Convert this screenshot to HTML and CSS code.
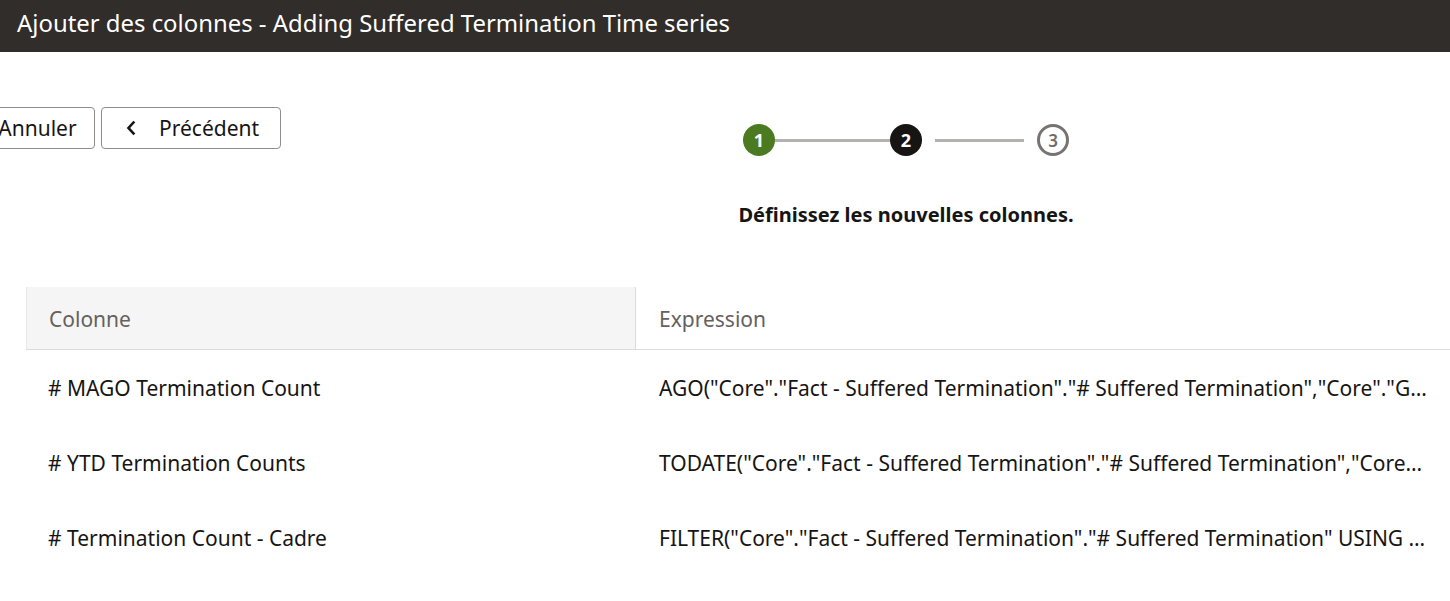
FILE: index.html
```html
<!DOCTYPE html>
<html lang="fr">
<head>
<meta charset="utf-8">
<title>Ajouter des colonnes</title>
<link rel="stylesheet" href="styles.css">
</head>
<body>
<header class="titlebar">
  <h1 class="title">Ajouter des colonnes - Adding Suffered Termination Time series</h1>
</header>
<main class="content">
  <div class="toolbar">
    <div class="buttons">
      <button class="btn btn-cancel">Annuler</button>
      <button class="btn btn-prev">
        <svg class="chev" width="12" height="16" viewBox="0 0 12 16"><path d="M8.5 2.5 L3.5 8 L8.5 13.5" fill="none" stroke="#161513" stroke-width="2.6" stroke-linecap="square"/></svg>
        <span>Précédent</span>
      </button>
    </div>
    <div class="wizard">
      <div class="stepper">
        <span class="step step-done">1</span>
        <span class="line line-1"></span>
        <span class="step step-current">2</span>
        <span class="line line-2"></span>
        <span class="step step-todo">3</span>
      </div>
      <p class="instr">Définissez les nouvelles colonnes.</p>
    </div>
  </div>
  <div class="table">
    <div class="row head">
      <div class="cell c1">Colonne</div>
      <div class="cell c2">Expression</div>
    </div>
    <div class="row">
      <div class="cell c1"># MAGO Termination Count</div>
      <div class="cell c2">AGO("Core"."Fact - Suffered Termination"."# Suffered Termination","Core"."G…</div>
    </div>
    <div class="row">
      <div class="cell c1"># YTD Termination Counts</div>
      <div class="cell c2">TODATE("Core"."Fact - Suffered Termination"."# Suffered Termination","Core…</div>
    </div>
    <div class="row">
      <div class="cell c1"># Termination Count - Cadre</div>
      <div class="cell c2">FILTER("Core"."Fact - Suffered Termination"."# Suffered Termination" USING …</div>
    </div>
  </div>
</main>
</body>
</html>
```

FILE: styles.css
```css
html, body {
  margin: 0;
  padding: 0;
  background: #ffffff;
  overflow: hidden;
  width: 1450px;
  height: 601px;
  font-family: "Noto Sans", "Open Sans", sans-serif;
  color: #161513;
}

.titlebar {
  height: 52px;
  background: #312d2a;
  display: flex;
  align-items: center;
  padding-left: 17px;
  box-sizing: border-box;
}

.title {
  margin: 0;
  font-size: 23.9px;
  font-weight: 400;
  color: #ffffff;
  letter-spacing: 0;
  line-height: 1;
  padding-bottom: 6px;
}

.content {
  padding-top: 55px;
}

.toolbar {
  display: flex;
  align-items: flex-start;
}

.buttons {
  display: flex;
  gap: 6px;
  margin-left: -28px;
}

.btn {
  height: 42px;
  border: 1px solid #8f8c89;
  border-radius: 4px;
  background: #ffffff;
  font-family: inherit;
  font-size: 21px;
  color: #161513;
  display: flex;
  align-items: center;
  box-sizing: border-box;
  padding: 0;
}

.btn-cancel {
  width: 123px;
  justify-content: center;
  padding-left: 8px;
}

.btn-prev {
  width: 180px;
  padding-left: 23px;
  gap: 22px;
}

.wizard {
  margin-left: 443px;
  width: 364px;
  display: flex;
  flex-direction: column;
  align-items: center;
  padding-top: 17px;
}

.stepper {
  display: flex;
  align-items: center;
}

.step {
  width: 32px;
  height: 32px;
  border-radius: 50%;
  display: flex;
  align-items: center;
  justify-content: center;
  font-size: 18px;
  font-weight: 700;
  box-sizing: border-box;
  line-height: 1;
}

.step-done {
  background: #4c7a21;
  color: #ffffff;
}

.step-current {
  background: #161513;
  color: #ffffff;
}

.step-todo {
  border: 3px solid #767371;
  color: #6f6c6a;
  font-size: 17px;
  font-weight: 600;
}

.line {
  height: 3px;
  background: #b4b2b0;
}

.line-1 {
  width: 115px;
}

.line-2 {
  width: 89px;
  margin-left: 13px;
  margin-right: 13px;
}

.instr {
  margin: 45px 0 0 0;
  font-size: 20px;
  font-weight: 700;
  color: #161513;
  white-space: nowrap;
}

.table {
  margin-top: 59px;
  margin-left: 26px;
  width: 1460px;
}

.row {
  display: flex;
  height: 75px;
  align-items: center;
}

.row.head {
  height: 63px;
  border-bottom: 1px solid #dcdbd9;
  box-sizing: border-box;
}

.cell {
  box-sizing: border-box;
  font-size: 21px;
  white-space: nowrap;
}

.c1 {
  width: 610px;
  padding-left: 22px;
}

.c2 {
  width: 850px;
  padding-left: 23px;
}

.head .cell {
  height: 100%;
  display: flex;
  align-items: center;
  color: #65615e;
  padding-top: 1px;
}

.head .c1 {
  background: #f5f5f5;
  border-left: 1px solid #e9e8e7;
  border-right: 1px solid #dcdbd9;
}
```
